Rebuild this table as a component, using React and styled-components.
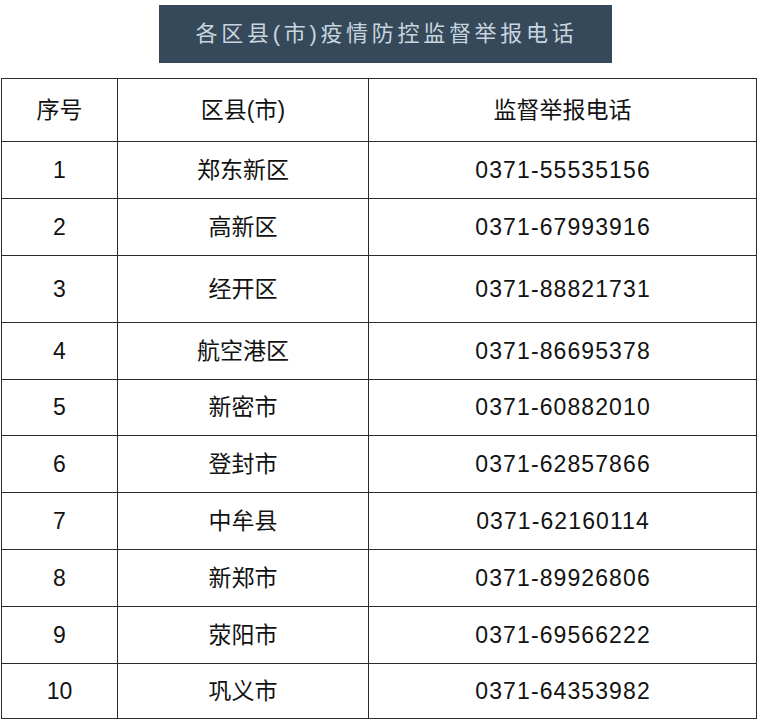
import React from "react";
import styled, { createGlobalStyle } from "styled-components";

const GlobalStyle = createGlobalStyle`
  html, body {
    margin: 0;
    padding: 0;
    background: #ffffff;
  }
  body {
    font-family: "Liberation Sans", "Noto Sans CJK SC", sans-serif;
    color: #161616;
  }
`;

const Page = styled.div`
  width: 757px;
  height: 720px;
  overflow: hidden;
  display: flex;
  flex-direction: column;
  align-items: flex-start;
  padding-top: 5px;
  box-sizing: border-box;
`;

const TitleBar = styled.div`
  margin-left: 159px;
  width: 453px;
  height: 58px;
  background: #35495b;
  display: flex;
  align-items: center;
  justify-content: center;
  box-sizing: border-box;
`;

const TitleText = styled.h1`
  margin: 0;
  padding-left: 2px;
  font-family: "Liberation Sans", "Noto Sans CJK SC", sans-serif;
  font-weight: 400;
  font-size: 22px;
  letter-spacing: 3.7px;
  color: #c9d5de;
  line-height: 1;
`;

const Table = styled.table`
  margin-top: 15px;
  margin-left: 1px;
  width: 755px;
  border-collapse: collapse;
  table-layout: fixed;
`;

const Col = styled.col`
  width: ${(p) => p.$w}px;
`;

const Row = styled.tr`
  height: ${(p) => p.$h}px;
`;

const Cell = styled.td`
  border: 1.5px solid #2b2b2b;
  padding: 0;
  text-align: center;
  vertical-align: middle;
  font-family: "Liberation Sans", "Noto Sans CJK SC", sans-serif;
  font-size: 23px;
  line-height: 1;
  color: #121212;
  letter-spacing: ${(p) => (p.$phone ? "1.1px" : "0")};
  padding-left: ${(p) => (p.$phone ? "1.1px" : "0")};
`;

const HeadCell = styled(Cell).attrs({ as: "th" })`
  font-weight: 400;
`;

const rows = [
  ["1", "郑东新区", "0371-55535156", 57],
  ["2", "高新区", "0371-67993916", 57],
  ["3", "经开区", "0371-88821731", 67],
  ["4", "航空港区", "0371-86695378", 57],
  ["5", "新密市", "0371-60882010", 56],
  ["6", "登封市", "0371-62857866", 57],
  ["7", "中牟县", "0371-62160114", 57],
  ["8", "新郑市", "0371-89926806", 57],
  ["9", "荥阳市", "0371-69566222", 57],
  ["10", "巩义市", "0371-64353982", 55],
];

export default function App() {
  return (
    <>
      <GlobalStyle />
      <Page>
        <TitleBar>
          <TitleText>各区县(市)疫情防控监督举报电话</TitleText>
        </TitleBar>
        <Table>
          <colgroup>
            <Col $w={116} />
            <Col $w={251} />
            <Col $w={388} />
          </colgroup>
          <thead>
            <Row $h={63}>
              <HeadCell>序号</HeadCell>
              <HeadCell>区县(市)</HeadCell>
              <HeadCell>监督举报电话</HeadCell>
            </Row>
          </thead>
          <tbody>
            {rows.map(([n, name, phone, h]) => (
              <Row key={n} $h={h}>
                <Cell>{n}</Cell>
                <Cell>{name}</Cell>
                <Cell $phone>{phone}</Cell>
              </Row>
            ))}
          </tbody>
        </Table>
      </Page>
    </>
  );
}
